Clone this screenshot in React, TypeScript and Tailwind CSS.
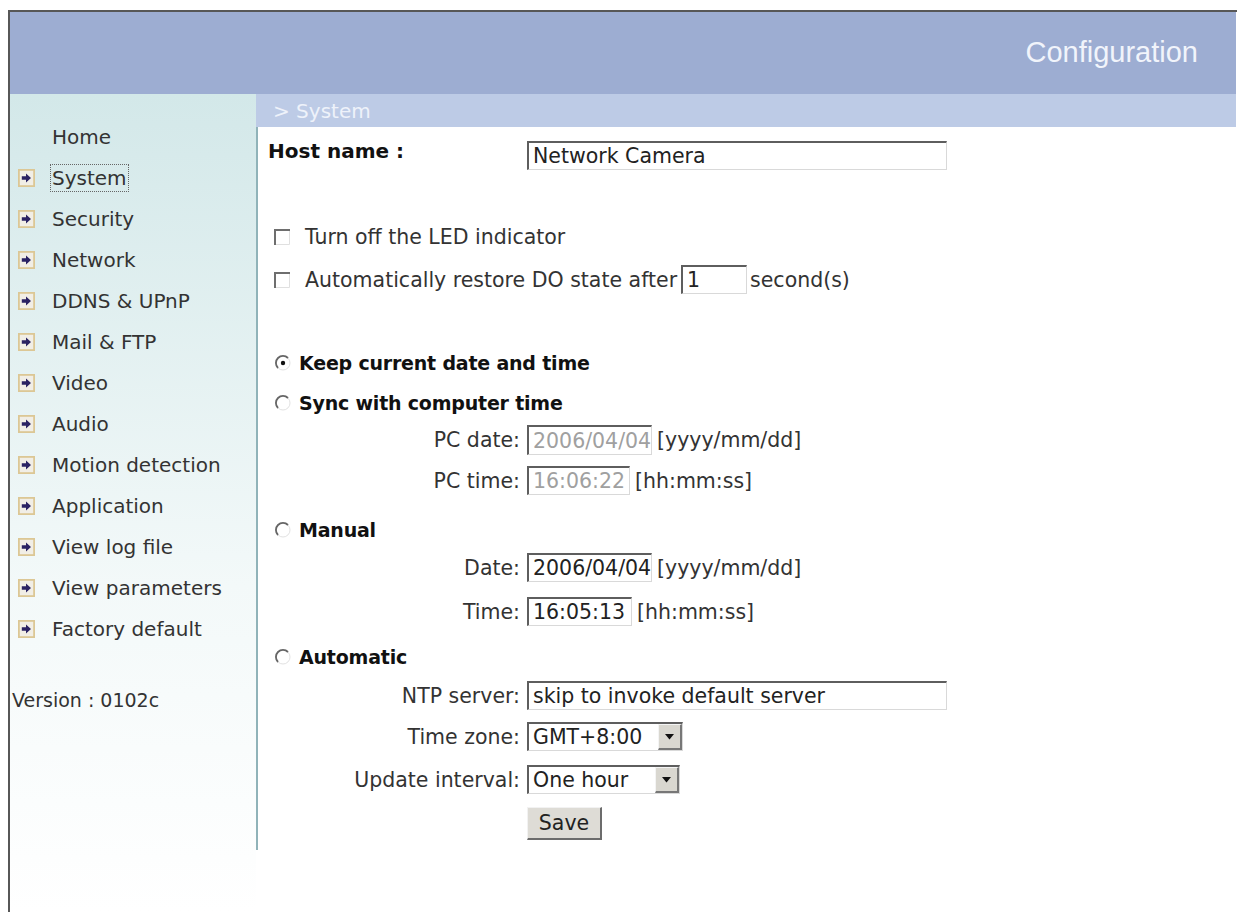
import React from "react";

const items = [
  "Home",
  "System",
  "Security",
  "Network",
  "DDNS & UPnP",
  "Mail & FTP",
  "Video",
  "Audio",
  "Motion detection",
  "Application",
  "View log file",
  "View parameters",
  "Factory default",
];

function NavIcon() {
  return (
    <svg width="17" height="18" viewBox="0 0 17 18" className="shrink-0">
      <rect x="0.9" y="0.9" width="15.2" height="16.2" fill="#f1eee6" stroke="#dcc795" strokeWidth="1.8" />
      <path d="M3.8 7.3h4.2V4.4L13 9l-5 4.6v-2.9H3.8z" fill="#2a2263" />
    </svg>
  );
}

function CheckBox() {
  return (
    <svg width="16" height="16" viewBox="0 0 16 16" className="shrink-0">
      <rect x="0" y="0" width="16" height="16" fill="#ffffff" />
      <path d="M15.5 0.5V15.5H0.5" fill="none" stroke="#e0e0e0" strokeWidth="1" />
      <path d="M1 16V1H16" fill="none" stroke="#6e6e6e" strokeWidth="2" />
    </svg>
  );
}

function Radio({ checked }: { checked?: boolean }) {
  return (
    <svg width="16" height="16" viewBox="0 0 16 16" className="shrink-0">
      <circle cx="8" cy="8" r="7" fill="#ffffff" stroke="#e2e2e2" strokeWidth="1" />
      <path d="M13 3A7 7 0 0 0 3 13" fill="none" stroke="#666666" strokeWidth="1.8" />
      {checked ? <circle cx="8" cy="8" r="2.2" fill="#111111" /> : null}
    </svg>
  );
}

function TextBox({ value, className, disabled }: { value: string; className: string; disabled?: boolean }) {
  return (
    <div
      className={
        "h-[29px] shrink-0 bg-white flex items-center pl-[4px] whitespace-nowrap overflow-hidden border-t-2 border-l-2 border-r border-b border-t-[#5e5e5e] border-l-[#5e5e5e] border-r-[#d9d9d9] border-b-[#d9d9d9] " +
        (disabled ? "text-[#a0a0a0] " : "text-[#222222] ") +
        className
      }
    >
      {value}
    </div>
  );
}

function Select({ value, className }: { value: string; className: string }) {
  return (
    <div
      className={
        "h-[29px] shrink-0 bg-white flex items-stretch border-t-2 border-l-2 border-r border-b border-t-[#5e5e5e] border-l-[#5e5e5e] border-r-[#d9d9d9] border-b-[#d9d9d9] " +
        className
      }
    >
      <div className="flex-1 flex items-center pl-[4px] text-[#222222] whitespace-nowrap">{value}</div>
      <div className="w-[24px] bg-[#d9d7d0] flex items-center justify-center border-t border-l border-r-2 border-b-2 border-t-[#f4f4f4] border-l-[#f4f4f4] border-r-[#777777] border-b-[#777777]">
        <svg width="9" height="6" viewBox="0 0 9 6">
          <path d="M0 0H9L4.5 5.5z" fill="#111111" />
        </svg>
      </div>
    </div>
  );
}

function LabelCell({ children }: { children: React.ReactNode }) {
  return <div className="w-[269px] shrink-0 text-right pr-[7px] whitespace-nowrap text-[#333333]">{children}</div>;
}

function RadioRow({ label, checked, className }: { label: string; checked?: boolean; className: string }) {
  return (
    <div className={"flex items-center h-[24px] pl-[17px] " + className}>
      <Radio checked={checked} />
      <span className="ml-[8px] font-bold text-[19px] tracking-[-0.2px] text-[#111111] whitespace-nowrap">{label}</span>
    </div>
  );
}

export default function App() {
  return (
    <div className="w-[1243px] h-[912px] bg-white overflow-hidden font-['DejaVu_Sans',Verdana,sans-serif] text-[20px] leading-[24px]">
      <div className="ml-[8px] mt-[10px] w-[1229px] h-[902px] border-t-2 border-l-2 border-[#575757]">
        {/* Header */}
        <div className="w-[1226px] h-[82px] bg-[#9dadd2] flex items-center justify-end pr-[38px]">
          <span className="font-['Liberation_Sans',Arial,sans-serif] text-[29px] text-[#f1f4fb] leading-[34px] -mt-[2px]">
            Configuration
          </span>
        </div>

        <div className="flex w-[1226px]">
          {/* Sidebar */}
          <div className="w-[246px] h-[818px] shrink-0 bg-linear-to-b from-[#d3e8e9] via-[#f3f9f9] via-60% to-white pt-[22px]">
            {items.map((it, i) => (
              <div key={it} className="h-[41px] flex items-center pl-[8px] text-[#333333]">
                {i === 0 ? <div className="w-[17px] shrink-0" /> : <NavIcon />}
                <span
                  className={
                    "ml-[17px] whitespace-nowrap " +
                    (i === 1 ? "outline outline-1 outline-dotted outline-[#666666] outline-offset-[1px]" : "")
                  }
                >
                  {it}
                </span>
              </div>
            ))}
            <div className="mt-[39px] pl-[2px] text-[19px] text-[#333333] whitespace-nowrap">Version : 0102c</div>
          </div>

          {/* Content */}
          <div className="w-[980px] shrink-0">
            <div className="h-[33px] bg-[#bdcbe6] flex items-center pl-[17px] text-[#eef2fa]">&gt; System</div>
            <div className="h-[723px] border-l-2 border-[#90b3b9] pt-[12px] text-[20.5px]">
              {/* Host name */}
              <div className="flex items-start h-[31px]">
                <div className="w-[269px] shrink-0 pl-[10px] font-bold text-[20px] text-[#111111] whitespace-nowrap">Host name :</div>
                <TextBox value="Network Camera" className="w-[420px] mt-[2px]" />
              </div>

              {/* Checkboxes */}
              <div className="flex items-center h-[24px] mt-[55px] pl-[16px] text-[#333333]">
                <CheckBox />
                <span className="ml-[15px] whitespace-nowrap">Turn off the LED indicator</span>
              </div>
              <div className="flex items-center h-[29px] mt-[16px] pl-[16px] text-[#333333]">
                <CheckBox />
                <span className="ml-[15px] whitespace-nowrap">Automatically restore DO state after</span>
                <TextBox value="1" className="w-[66px] ml-[4px]" />
                <span className="ml-[3px] whitespace-nowrap">second(s)</span>
              </div>

              <RadioRow label="Keep current date and time" checked className="mt-[57px]" />
              <RadioRow label="Sync with computer time" className="mt-[16px]" />
              <div className="flex items-center h-[30px] mt-[10px]">
                <LabelCell>PC date:</LabelCell>
                <TextBox value="2006/04/04" className="w-[125px] h-[30px]" disabled />
                <span className="ml-[5px] text-[#333333] whitespace-nowrap">[yyyy/mm/dd]</span>
              </div>
              <div className="flex items-center h-[29px] mt-[11px]">
                <LabelCell>PC time:</LabelCell>
                <TextBox value="16:06:22" className="w-[103px]" disabled />
                <span className="ml-[5px] text-[#333333] whitespace-nowrap">[hh:mm:ss]</span>
              </div>

              <RadioRow label="Manual" className="mt-[23px]" />
              <div className="flex items-center h-[29px] mt-[11px]">
                <LabelCell>Date:</LabelCell>
                <TextBox value="2006/04/04" className="w-[125px]" />
                <span className="ml-[5px] text-[#333333] whitespace-nowrap">[yyyy/mm/dd]</span>
              </div>
              <div className="flex items-center h-[29px] mt-[15px]">
                <LabelCell>Time:</LabelCell>
                <TextBox value="16:05:13" className="w-[105px]" />
                <span className="ml-[5px] text-[#333333] whitespace-nowrap">[hh:mm:ss]</span>
              </div>

              <RadioRow label="Automatic" className="mt-[19px]" />
              <div className="flex items-center h-[29px] mt-[12px]">
                <LabelCell>NTP server:</LabelCell>
                <TextBox value="skip to invoke default server" className="w-[420px]" />
              </div>
              <div className="flex items-center h-[29px] mt-[12px]">
                <LabelCell>Time zone:</LabelCell>
                <Select value="GMT+8:00" className="w-[156px]" />
              </div>
              <div className="flex items-center h-[29px] mt-[14px]">
                <LabelCell>Update interval:</LabelCell>
                <Select value="One hour" className="w-[153px]" />
              </div>
              <div className="flex items-center h-[33px] mt-[13px]">
                <div className="w-[269px] shrink-0" />
                <div className="w-[75px] h-[33px] flex items-center justify-center bg-[#dedcd6] text-[#222222] border-t border-l border-r-2 border-b-2 border-t-[#f2f2f2] border-l-[#f2f2f2] border-r-[#6c6c6c] border-b-[#6c6c6c]">
                  Save
                </div>
              </div>
            </div>
          </div>
        </div>
      </div>
    </div>
  );
}
